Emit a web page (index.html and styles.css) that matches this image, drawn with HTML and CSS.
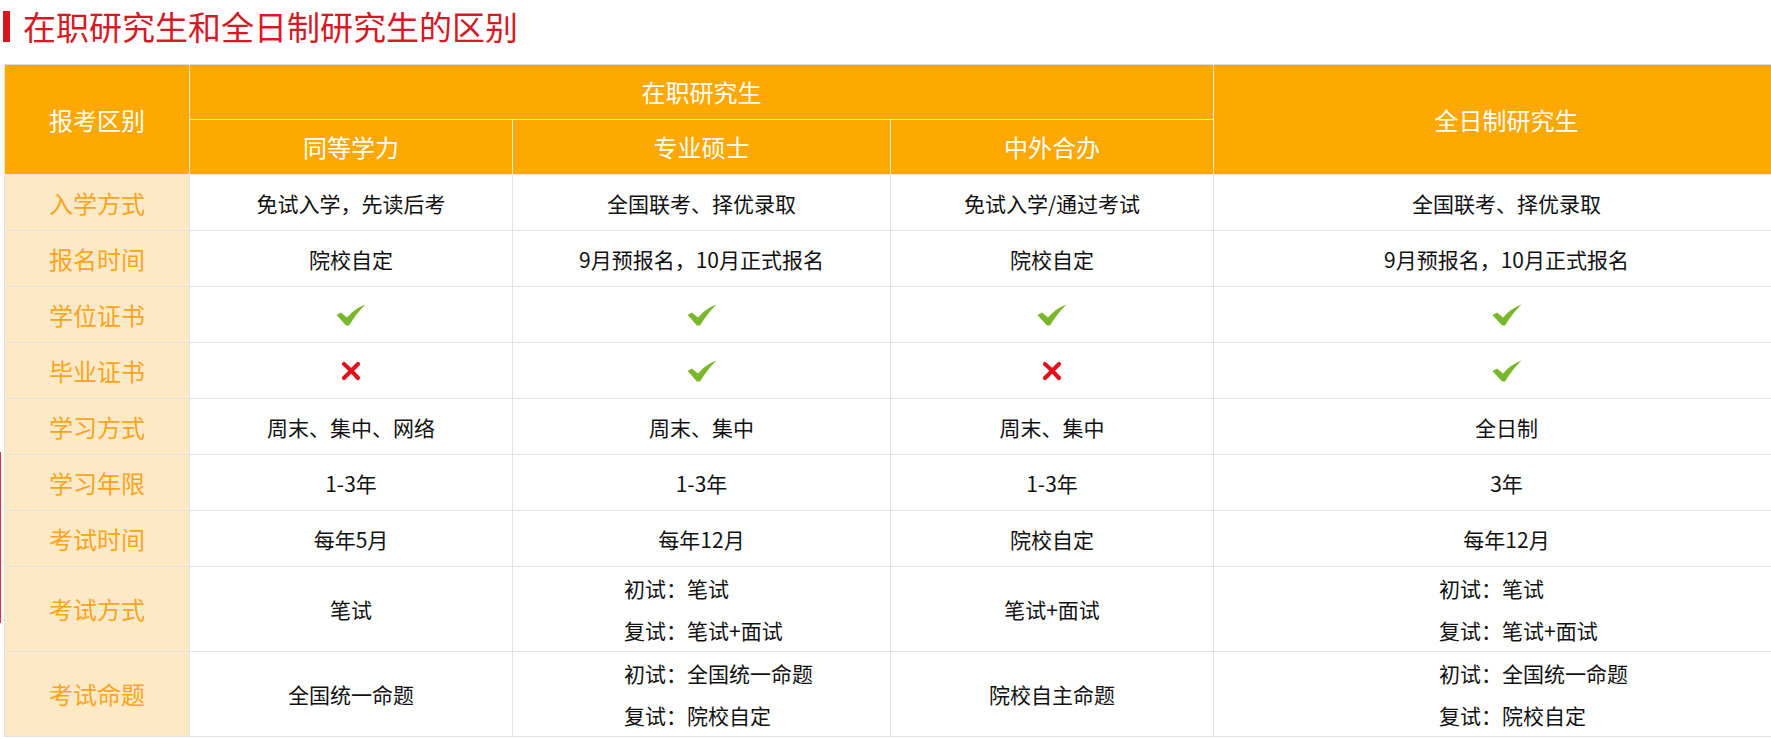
FILE: index.html
```html
<!DOCTYPE html>
<html lang="zh-CN">
<head>
<meta charset="utf-8">
<title>在职研究生和全日制研究生的区别</title>
<link rel="stylesheet" href="styles.css">
</head>
<body>
<div class="edge-mark"></div>
<h2 class="title"><span class="title-bar"></span><span class="title-text">在职研究生和全日制研究生的区别</span></h2>
<div class="table-wrap">
<table class="cmp">
  <colgroup>
    <col class="c1"><col class="c2"><col class="c3"><col class="c4"><col class="c5">
  </colgroup>
  <thead>
    <tr>
      <th rowspan="2">报考区别</th>
      <th colspan="3">在职研究生</th>
      <th rowspan="2">全日制研究生</th>
    </tr>
    <tr>
      <th>同等学力</th>
      <th>专业硕士</th>
      <th>中外合办</th>
    </tr>
  </thead>
  <tbody>
    <tr>
      <td class="label">入学方式</td>
      <td>免试入学，先读后考</td>
      <td>全国联考、择优录取</td>
      <td>免试入学/通过考试</td>
      <td>全国联考、择优录取</td>
    </tr>
    <tr>
      <td class="label">报名时间</td>
      <td>院校自定</td>
      <td>9月预报名，10月正式报名</td>
      <td>院校自定</td>
      <td>9月预报名，10月正式报名</td>
    </tr>
    <tr>
      <td class="label">学位证书</td>
      <td><svg class="yes" viewBox="0 0 30 22"><path d="M0.5 11 L5 8.5 L11 13.5 Q18.5 4.5 29.5 0.5 Q21.5 8 13 21.5 L10 21.5 Z"/></svg></td>
      <td><svg class="yes" viewBox="0 0 30 22"><path d="M0.5 11 L5 8.5 L11 13.5 Q18.5 4.5 29.5 0.5 Q21.5 8 13 21.5 L10 21.5 Z"/></svg></td>
      <td><svg class="yes" viewBox="0 0 30 22"><path d="M0.5 11 L5 8.5 L11 13.5 Q18.5 4.5 29.5 0.5 Q21.5 8 13 21.5 L10 21.5 Z"/></svg></td>
      <td><svg class="yes" viewBox="0 0 30 22"><path d="M0.5 11 L5 8.5 L11 13.5 Q18.5 4.5 29.5 0.5 Q21.5 8 13 21.5 L10 21.5 Z"/></svg></td>
    </tr>
    <tr>
      <td class="label">毕业证书</td>
      <td><svg class="no" viewBox="0 0 20 20"><path d="M3 3 Q10 9 17 17 M17 3 Q10 10 3 17"/></svg></td>
      <td><svg class="yes" viewBox="0 0 30 22"><path d="M0.5 11 L5 8.5 L11 13.5 Q18.5 4.5 29.5 0.5 Q21.5 8 13 21.5 L10 21.5 Z"/></svg></td>
      <td><svg class="no" viewBox="0 0 20 20"><path d="M3 3 Q10 9 17 17 M17 3 Q10 10 3 17"/></svg></td>
      <td><svg class="yes" viewBox="0 0 30 22"><path d="M0.5 11 L5 8.5 L11 13.5 Q18.5 4.5 29.5 0.5 Q21.5 8 13 21.5 L10 21.5 Z"/></svg></td>
    </tr>
    <tr>
      <td class="label">学习方式</td>
      <td>周末、集中、网络</td>
      <td>周末、集中</td>
      <td>周末、集中</td>
      <td>全日制</td>
    </tr>
    <tr>
      <td class="label">学习年限</td>
      <td>1-3年</td>
      <td>1-3年</td>
      <td>1-3年</td>
      <td>3年</td>
    </tr>
    <tr>
      <td class="label">考试时间</td>
      <td>每年5月</td>
      <td>每年12月</td>
      <td>院校自定</td>
      <td>每年12月</td>
    </tr>
    <tr>
      <td class="label">考试方式</td>
      <td>笔试</td>
      <td><div class="lines lines-mid"><p>初试：笔试</p><p>复试：笔试+面试</p></div></td>
      <td>笔试+面试</td>
      <td><div class="lines lines-wide"><p>初试：笔试</p><p>复试：笔试+面试</p></div></td>
    </tr>
    <tr>
      <td class="label">考试命题</td>
      <td>全国统一命题</td>
      <td><div class="lines lines-mid"><p>初试：全国统一命题</p><p>复试：院校自定</p></div></td>
      <td>院校自主命题</td>
      <td><div class="lines lines-wide"><p>初试：全国统一命题</p><p>复试：院校自定</p></div></td>
    </tr>
  </tbody>
</table>
</div>
</body>
</html>
```

FILE: styles.css
```css
html, body {
  margin: 0;
  padding: 0;
  overflow: hidden;
  background: #ffffff;
}

body {
  font-family: "Noto Sans CJK SC", "Noto Sans", sans-serif;
  color: #111;
  position: relative;
}

.edge-mark {
  position: absolute;
  left: 0;
  top: 452px;
  width: 1px;
  height: 171px;
  background: #e5313b;
}

.title {
  display: flex;
  align-items: center;
  gap: 13px;
  margin: 10px 0 0 3px;
  height: 32px;
  font-weight: normal;
}

.title-bar {
  display: block;
  width: 7px;
  height: 31px;
  background: #d9161c;
}

.title-text {
  font-size: 33px;
  line-height: 32px;
  color: #d41b25;
}

.table-wrap {
  margin: 22px 0 0 4px;
  overflow: hidden;
}

.cmp {
  border-collapse: collapse;
  table-layout: fixed;
  width: 1795px;
}

.c1 { width: 185px; }
.c2 { width: 323px; }
.c3 { width: 378px; }
.c4 { width: 323px; }
.c5 { width: 586px; }

.cmp th,
.cmp td {
  padding: 0;
  text-align: center;
  vertical-align: middle;
  border: 1px solid #e2e2e2;
}

.cmp thead th {
  background: #ffa800;
  color: #ffffff;
  font-size: 24px;
  font-weight: normal;
  height: 54px;
  line-height: 30px;
  border-color: #f4e8d2;
}

.cmp thead tr:first-child th {
  border-top-color: #dcdcdc;
}

.cmp tbody td {
  height: 55px;
  font-size: 21px;
  line-height: 42px;
  color: #111;
}

.cmp tbody td.label {
  background: #fde9c6;
  color: #fba51e;
  font-size: 24px;
}

.lines {
  text-align: left;
}

.lines p {
  margin: 0;
}

.lines-mid {
  padding-left: 111px;
}

.lines-wide {
  padding-left: 225px;
}

.yes {
  display: block;
  margin: 0 auto;
  width: 30px;
  height: 22px;
  fill: #7ab72a;
}

.no {
  display: block;
  margin: 0 auto;
  width: 20px;
  height: 20px;
  fill: none;
  stroke: #e3101d;
  stroke-width: 4.2;
  stroke-linecap: round;
}
```
